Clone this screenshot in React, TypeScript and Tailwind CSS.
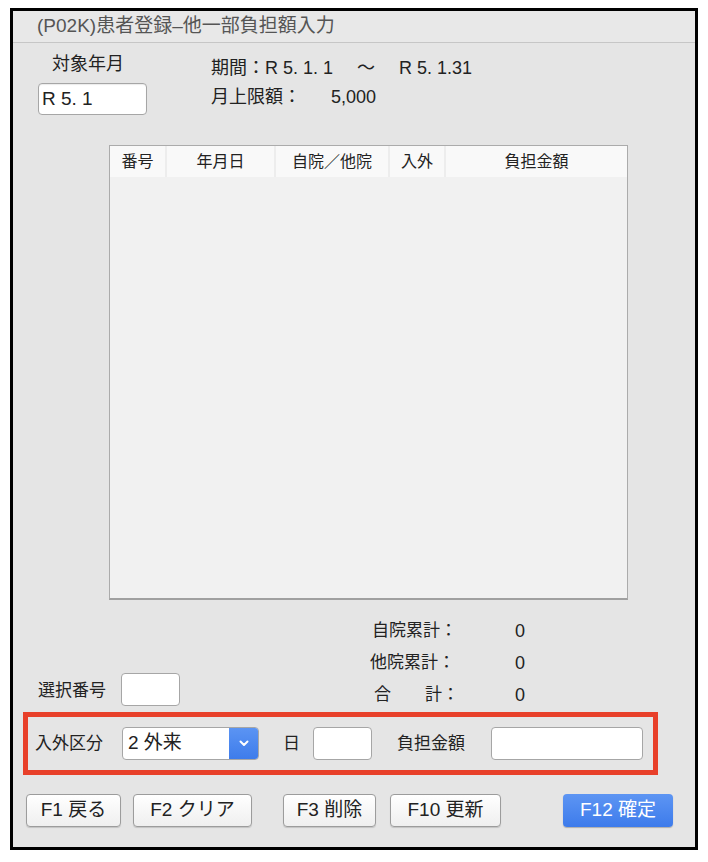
import React from 'react';

const font = { fontFamily: '"Liberation Sans", "Noto Sans CJK JP", sans-serif' };

const columns = [
  { label: '番号', w: 'w-[57px]' },
  { label: '年月日', w: 'w-[109px]' },
  { label: '自院／他院', w: 'w-[114px]' },
  { label: '入外', w: 'w-[56px]' },
  { label: '負担金額', w: 'flex-1' },
];

const totals = [
  { label: '自院累計：', value: '0', pad: 'pl-[2px]' },
  { label: '他院累計：', value: '0', pad: 'pl-0' },
  { label: '合　　計：', value: '0', pad: 'pl-[4px]' },
];

const FKey = ({ label, w, primary = false }: { label: string; w: string; primary?: boolean }) => (
  <button
    className={
      primary
        ? `${w} h-[33px] rounded-[4px] bg-gradient-to-b from-[#5d95f3] to-[#3d7beb] text-white text-[19px] shadow-[0_1px_1px_rgba(0,0,0,0.25)]`
        : `${w} h-[33px] rounded-[4px] border border-[#9c9c9c] bg-gradient-to-b from-white to-[#efefef] text-[#222] text-[19px] shadow-[0_1px_1px_rgba(0,0,0,0.15)]`
    }
  >
    {label}
  </button>
);

export default function App() {
  return (
    <div className="min-h-[862px] bg-white pt-[8px] pl-[10px]" style={font}>
      <div className="w-[688px] h-[842px] border-[3px] border-black bg-[#e5e5e5] flex flex-col text-[#222]">
        {/* title bar */}
        <div className="h-[32px] border-b border-[#c6c6c6] bg-[#e8e8e8] pl-[24px] flex items-center text-[19px] text-[#555]">
          (P02K)患者登録–他一部負担額入力
        </div>

        {/* month / period */}
        <div className="flex pt-[11px]">
          <div className="pl-[25px] w-[198px]">
            <div className="h-[20px] pl-[14px] flex items-center text-[18px]">対象年月</div>
            <div className="mt-[9px] w-[109px] h-[32px] rounded-[4px] border border-[#a6a6a6] bg-white pl-[3px] flex items-center text-[19px] shadow-[inset_0_1px_1px_rgba(0,0,0,0.08)]">
              R 5. 1
            </div>
          </div>
          <div className="text-[18px]">
            <div className="h-[29px] flex items-center">
              <span>期間：R 5. 1. 1</span>
              <span className="ml-[24px]">〜</span>
              <span className="ml-[24px]">R 5. 1.31</span>
            </div>
            <div className="h-[29px] flex items-center">
              <span>月上限額：</span>
              <span className="ml-[30px]">5,000</span>
            </div>
          </div>
        </div>

        {/* table */}
        <div className="ml-[96px] mt-[30px] w-[519px] h-[455px] border border-[#ababab] border-b-2 border-b-[#a0a0a0] bg-[#f1f1f1] flex flex-col">
          <div className="h-[31px] flex bg-[#f9f9f9] text-[16px]">
            {columns.map((c, i) => (
              <div
                key={c.label}
                className={`${c.w} flex items-center justify-center ${i < columns.length - 1 ? 'border-r-2 border-[#ededed]' : ''}`}
              >
                {c.label}
              </div>
            ))}
          </div>
        </div>

        {/* selection + totals */}
        <div className="flex mt-[15px]">
          <div className="pl-[25px] pt-[53px] flex items-center w-[357px]">
            <span className="text-[17px] mt-[3px]">選択番号</span>
            <div className="ml-[15px] w-[59px] h-[33px] rounded-[4px] border border-[#a6a6a6] bg-white" />
          </div>
          <div className="text-[17px]">
            {totals.map((t) => (
              <div key={t.label} className="h-[32px] flex items-center">
                <span className={`${t.pad} w-[145px]`}>{t.label}</span>
                <span className="text-[18px]">{t.value}</span>
              </div>
            ))}
          </div>
        </div>

        {/* highlighted input row */}
        <div className="ml-[10px] mt-[1px] w-[635px] h-[63px] border-[5px] border-[#e8402a] flex items-center text-[17px]">
          <span className="ml-[7px]">入外区分</span>
          <div className="ml-[19px] w-[137px] h-[33px] flex rounded-[4px] border border-[#a6a6a6] bg-white overflow-hidden">
            <div className="flex-1 pl-[5px] flex items-center text-[19px]">2 外来</div>
            <div className="w-[29px] bg-gradient-to-b from-[#5b94f3] to-[#3e7ceb] flex items-center justify-center">
              <svg width="10" height="7" viewBox="0 0 10 7" fill="none">
                <path d="M1.5 1.5 L5 5 L8.5 1.5" stroke="white" strokeWidth="2" strokeLinecap="round" strokeLinejoin="round" />
              </svg>
            </div>
          </div>
          <span className="ml-[24px]">日</span>
          <div className="ml-[13px] w-[59px] h-[33px] rounded-[4px] border border-[#a6a6a6] bg-white" />
          <span className="ml-[25px]">負担金額</span>
          <div className="ml-[26px] w-[152px] h-[33px] rounded-[4px] border border-[#a6a6a6] bg-white" />
        </div>

        {/* function keys */}
        <div className="flex items-center mt-[19px] pl-[13px]">
          <FKey label="F1 戻る" w="w-[95px]" />
          <div className="ml-[12px]"><FKey label="F2 クリア" w="w-[119px]" /></div>
          <div className="ml-[31px]"><FKey label="F3 削除" w="w-[93px]" /></div>
          <div className="ml-[14px]"><FKey label="F10 更新" w="w-[111px]" /></div>
          <div className="ml-[62px]"><FKey label="F12 確定" w="w-[110px]" primary /></div>
        </div>
      </div>
    </div>
  );
}
